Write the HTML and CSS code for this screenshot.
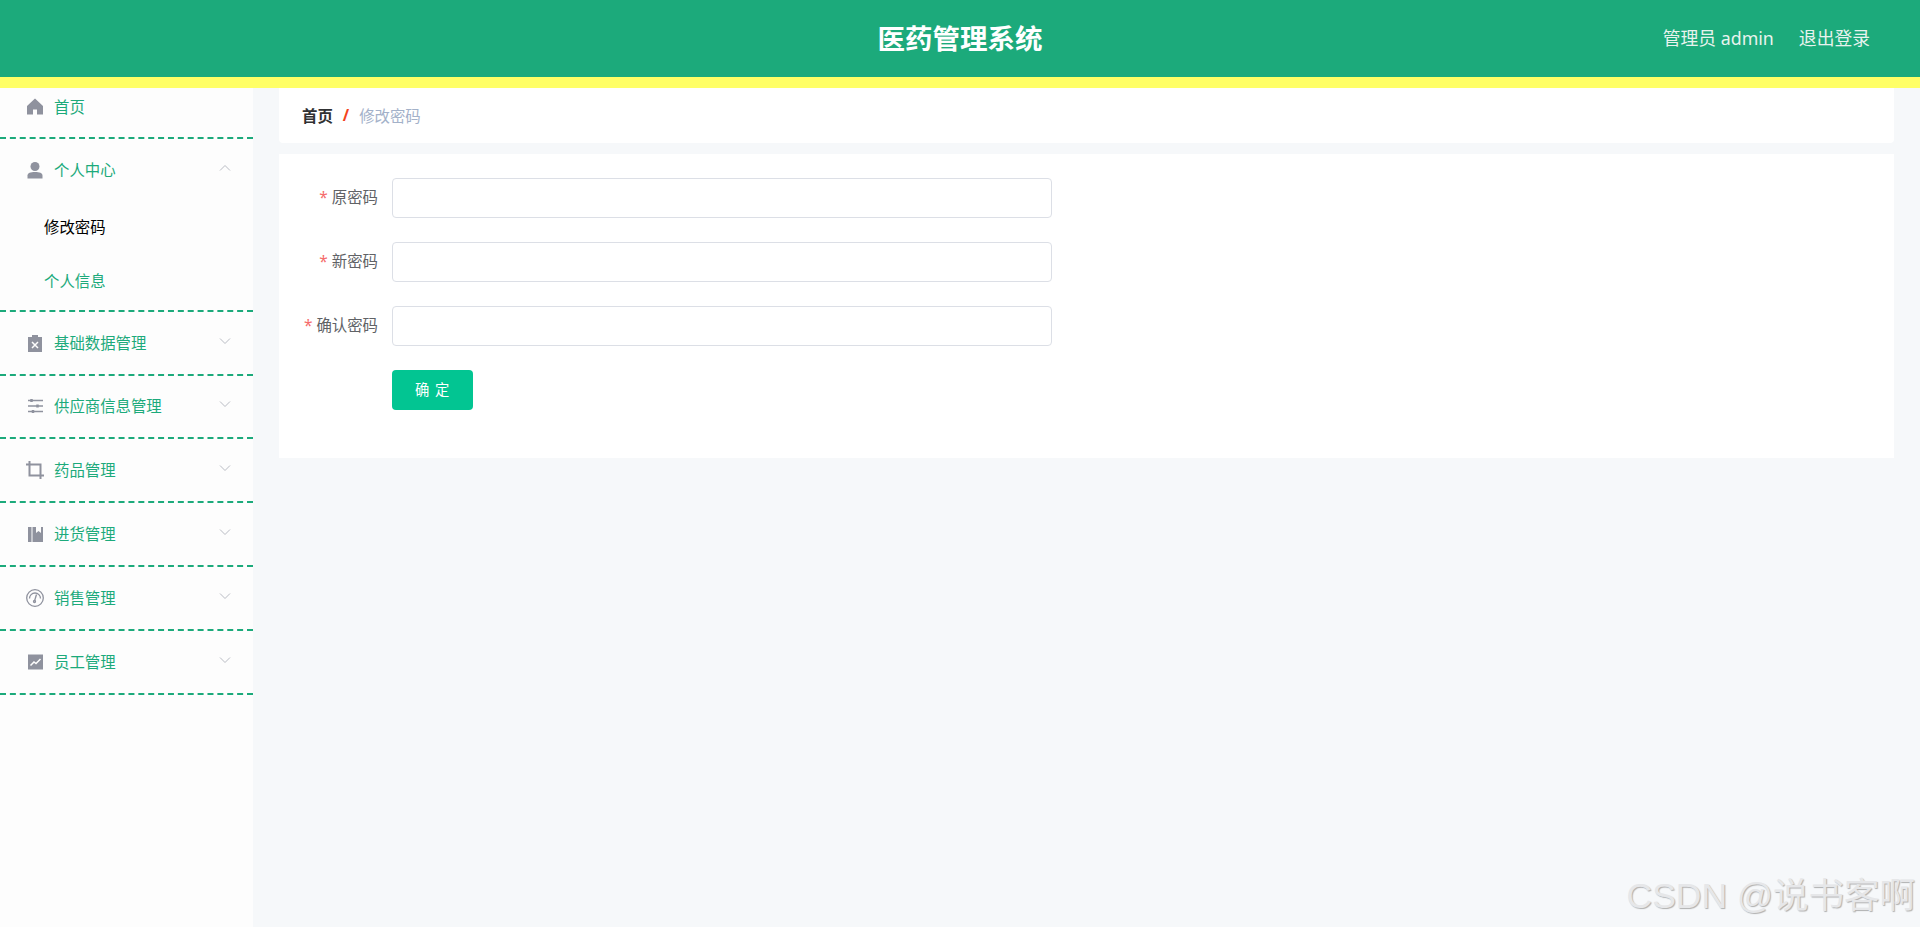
FILE: index.html
```html
<!DOCTYPE html>
<html lang="zh-CN">
<head>
  <meta charset="UTF-8" />
  <meta name="viewport" content="width=device-width, initial-scale=1" />
  <title>医药管理系统</title>
  <link rel="stylesheet" href="styles.css">
</head>
<body>

  <header class="topbar">
    <div></div>
    <div class="topbar-title">医药管理系统</div>
    <div class="topbar-user">
      <span>管理员 admin</span>
      <span>退出登录</span>
    </div>
  </header>

  <div class="layout">
    <!-- Sidebar -->
    <aside class="sidebar">
      <div class="menu-item">
        <div class="menu-title menu-title-home">
          <svg class="icon" viewBox="0 0 18 18"><path d="M9 .5 1 8v8.500h6v-5h4v5h6V8z"/></svg>
          <span class="menu-text">首页</span>
        </div>
      </div>

      <div class="menu-item">
        <div class="menu-title">
          <svg class="icon" viewBox="0 0 18 18"><circle cx="9" cy="5.500" r="4.500"/><path d="M1.500 17.500v-3c0-2.500 3-3.500 7.500-3.500s7.500 1 7.500 3.500v3z"/></svg>
          <span class="menu-text">个人中心</span>
          <svg class="arrow" viewBox="0 0 12 8"><path d="M1 6.500 6 1.500l5 5"/></svg>
        </div>
        <div class="submenu-item submenu-active">修改密码</div>
        <div class="submenu-item">个人信息</div>
      </div>

      <div class="menu-item">
        <div class="menu-title">
          <svg class="icon" viewBox="0 0 18 18"><path d="M2 3h4V1h6v2h4v15H2z"/><path class="icon-cut" d="M6 8l6 6m0-6-6 6"/></svg>
          <span class="menu-text">基础数据管理</span>
          <svg class="arrow" viewBox="0 0 12 8"><path d="M1 1.500 6 6.500l5-5"/></svg>
        </div>
      </div>

      <div class="menu-item">
        <div class="menu-title">
          <svg class="icon icon-line" viewBox="0 0 18 18"><path d="M2 3.500h15M2 9h15M2 14.500h15"/><path class="icon-knob" d="M5.500 2v3M11.500 7.500v3M7 13v3"/></svg>
          <span class="menu-text">供应商信息管理</span>
          <svg class="arrow" viewBox="0 0 12 8"><path d="M1 1.500 6 6.500l5-5"/></svg>
        </div>
      </div>

      <div class="menu-item">
        <div class="menu-title">
          <svg class="icon icon-line icon-crop" viewBox="0 0 18 18"><path d="M3.500 0v14.500H18M0 3.500h14.500V18"/></svg>
          <span class="menu-text">药品管理</span>
          <svg class="arrow" viewBox="0 0 12 8"><path d="M1 1.500 6 6.500l5-5"/></svg>
        </div>
      </div>

      <div class="menu-item">
        <div class="menu-title">
          <svg class="icon" viewBox="0 0 18 18"><path d="M2 2h3.500v15H2zM6.500 2H10v6l2.500-2L15 8V2h2v15H6.500z"/></svg>
          <span class="menu-text">进货管理</span>
          <svg class="arrow" viewBox="0 0 12 8"><path d="M1 1.500 6 6.500l5-5"/></svg>
        </div>
      </div>

      <div class="menu-item">
        <div class="menu-title">
          <svg class="icon icon-line icon-gauge" viewBox="0 0 18 18"><circle cx="9" cy="9" r="8.300"/><path d="M3.500 9.500a5.500 5.500 0 0 1 11 0"/><path d="M10.500 5.500 8.500 12"/><circle cx="8.500" cy="12.500" r="1"/></svg>
          <span class="menu-text">销售管理</span>
          <svg class="arrow" viewBox="0 0 12 8"><path d="M1 1.500 6 6.500l5-5"/></svg>
        </div>
      </div>

      <div class="menu-item">
        <div class="menu-title">
          <svg class="icon" viewBox="0 0 18 18"><path d="M2 1.500h15v15H2z"/><path class="icon-cut" d="M4.500 12.500 8 9l2 1.500L14.500 6"/></svg>
          <span class="menu-text">员工管理</span>
          <svg class="arrow" viewBox="0 0 12 8"><path d="M1 1.500 6 6.500l5-5"/></svg>
        </div>
      </div>
    </aside>

    <!-- Content -->
    <main class="content">
      <nav class="breadcrumb">
        <span class="crumb-home">首页</span>
        <span class="crumb-sep">/</span>
        <span class="crumb-current">修改密码</span>
      </nav>

      <form class="card">
        <div class="form-row">
          <label class="form-label" for="oldPwd"><i>*</i>原密码</label>
          <input class="form-input" type="password" id="oldPwd" />
        </div>
        <div class="form-row">
          <label class="form-label" for="newPwd"><i>*</i>新密码</label>
          <input class="form-input" type="password" id="newPwd" />
        </div>
        <div class="form-row">
          <label class="form-label" for="confirmPwd"><i>*</i>确认密码</label>
          <input class="form-input" type="password" id="confirmPwd" />
        </div>
        <div class="form-row form-row-last">
          <div class="form-label"></div>
          <button class="btn-submit" type="button">确 定</button>
        </div>
      </form>
    </main>
  </div>

  <div class="watermark">CSDN @说书客啊</div>

</body>
</html>
```
FILE: styles.css
```css
body {
  margin: 0;
  height: 927px;
  overflow: hidden;
  font-family: "Noto Sans", "Noto Sans CJK SC", sans-serif;
  font-size: 15.4px;
  background: #f6f8fa;
  color: #606266;
}

/* Header */
.topbar {
  height: 77px;
  border-bottom: 11px solid #ffff66;
  background: #1caa7b;
  color: #fff;
  display: grid;
  grid-template-columns: 1fr auto 1fr;
  align-items: center;
}

.topbar-title {
  font-size: 27.500px;
  font-weight: 700;
  margin-bottom: 3px;
}

.topbar-user {
  display: flex;
  justify-content: flex-end;
  gap: 25px;
  padding-right: 50px;
  font-size: 17.800px;
  color: #e8f3ee;
  margin-top: -3px;
}

/* Layout */
.layout {
  display: flex;
  height: 839px;
}

.sidebar {
  width: 253px;
  flex-shrink: 0;
  background: #fdfdfd;
}

.menu-item {
  border-bottom: 2px dashed #1caa7b;
}

.menu-title {
  height: 61.800px;
  padding: 0 22px 0 26px;
  display: flex;
  align-items: center;
  color: #1caa7b;
}

.menu-title-home {
  height: 38px;
  padding-bottom: 11px;
}

.menu-text {
  margin-bottom: 1px;
}

.icon {
  width: 18px;
  height: 18px;
  margin-right: 10px;
  fill: #8f929e;
  flex-shrink: 0;
}

.icon-cut {
  fill: none;
  stroke: #fdfdfd;
  stroke-width: 1.500;
}

.icon-line {
  fill: none;
  stroke: #8f929e;
  stroke-width: 1.500;
}

.icon-knob {
  stroke-width: 2.500;
}

.icon-crop {
  stroke-width: 2;
}

.icon-gauge {
  stroke-width: 1.300;
}

.arrow {
  width: 12px;
  height: 8px;
  margin-left: auto;
  margin-bottom: 4px;
  fill: none;
  stroke: #b9bcc4;
  stroke-width: 1;
}

.submenu-item {
  height: 54.500px;
  line-height: 54px;
  padding-left: 44px;
  color: #1caa7b;
}

.submenu-active {
  color: #000;
}

/* Content */
.content {
  flex: 1;
  padding: 0 26px;
}

.breadcrumb {
  height: 55px;
  margin-bottom: 11px;
  padding-left: 23px;
  display: flex;
  align-items: center;
  background: #fff;
  border-radius: 0 0 4px 4px;
}

.crumb-home {
  color: #303133;
  font-weight: 700;
}

.crumb-sep {
  margin: 0 10px;
  color: #f4441c;
  font-weight: 700;
}

.crumb-current {
  color: #a3b1c9;
}

.card {
  padding: 24px 0 48px;
  background: #fff;
}

.form-row {
  display: flex;
  align-items: center;
  margin-bottom: 24px;
}

.form-row-last {
  margin-bottom: 0;
}

.form-label {
  width: 99px;
  margin-right: 14px;
  margin-bottom: 3px;
  text-align: right;
  flex-shrink: 0;
}

.form-label i {
  margin-right: 4px;
  color: #f56c6c;
  font-style: normal;
}

.form-input {
  width: 660px;
  height: 40px;
  box-sizing: border-box;
  border: 1px solid #dcdfe6;
  border-radius: 4px;
  background: #fff;
}

.btn-submit {
  width: 81px;
  height: 40px;
  padding: 0 0 3px;
  border: none;
  border-radius: 4px;
  background: #02c592;
  color: #fff;
  font-family: inherit;
  font-size: 14.300px;
  letter-spacing: 0.5px;
  word-spacing: 1px;
}

.watermark {
  position: absolute;
  right: 5px;
  bottom: 9px;
  font-family: "Liberation Sans", "Noto Sans CJK SC", sans-serif;
  font-size: 35.500px;
  color: #e6e7e9;
  text-shadow: 1px 1px 1px #b0b0b0;
}
```
